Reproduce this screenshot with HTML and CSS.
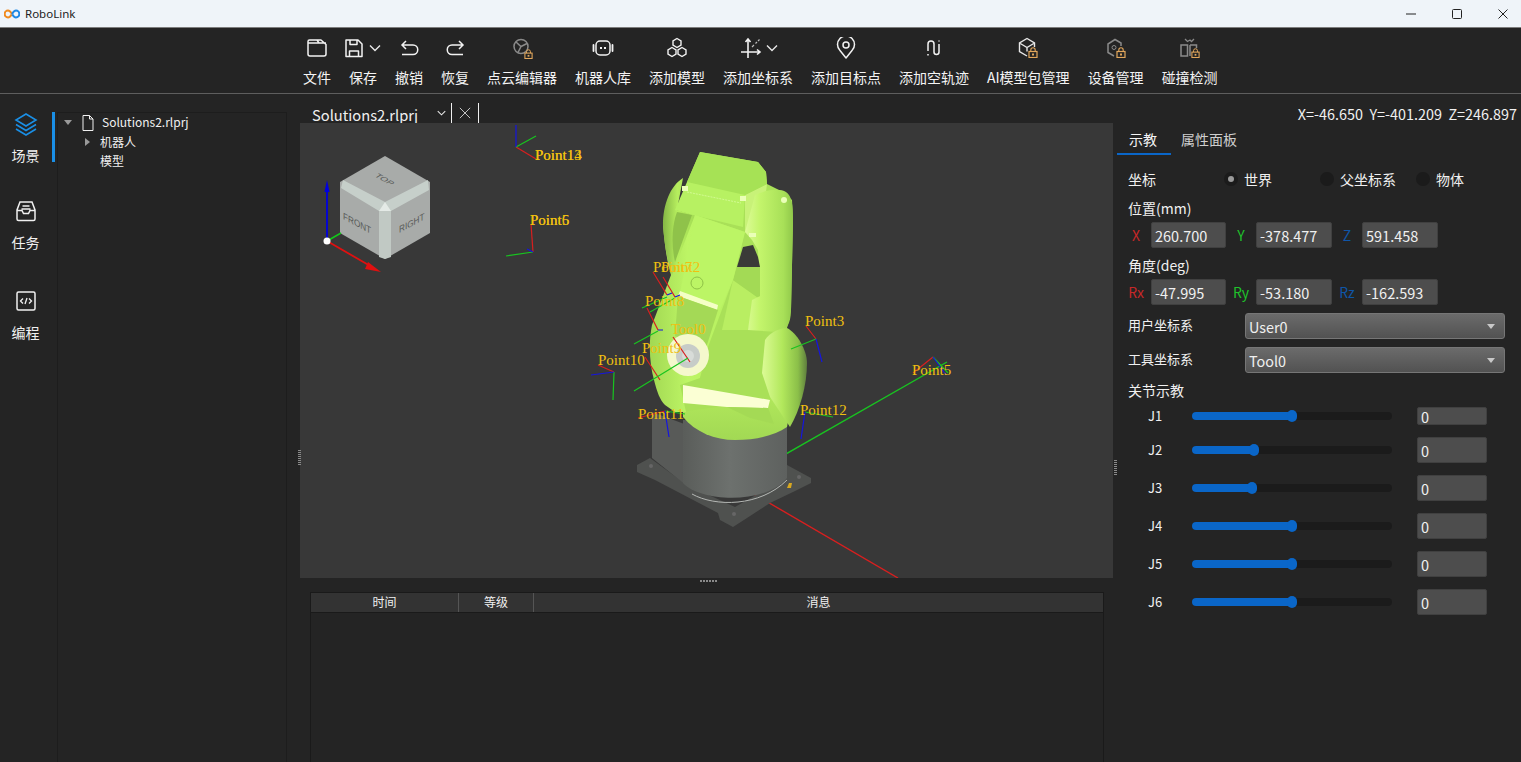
FILE: index.html
```html
<!DOCTYPE html>
<html lang="zh">
<head>
<meta charset="utf-8">
<title>RoboLink</title>
<link rel="stylesheet" href="styles.css">
</head>
<body>
<svg class="defs" width="0" height="0">
  <symbol id="lock" viewBox="0 0 10 11">
    <path d="M2.8 4.5V3a2.2 2.2 0 0 1 4.4 0v1.5" fill="none" stroke="#e2a75c" stroke-width="1.1"/>
    <rect x="1" y="4.5" width="8" height="6" fill="none" stroke="#e2a75c" stroke-width="1.2"/>
    <rect x="4" y="6.5" width="2" height="2" fill="#e2a75c"/>
  </symbol>
  <symbol id="chev" viewBox="0 0 12 8">
    <path d="M1 1.5l5 5 5-5" fill="none" stroke="#e8e8e8" stroke-width="1.4"/>
  </symbol>
</svg>

<header class="titlebar">
  <div class="brand">
    <svg class="logo" viewBox="0 0 16 10"><path d="M8 5C6.5 2.5 5.5 1.6 4 1.6a3.4 3.4 0 0 0 0 6.8c1.5 0 2.5-.9 4-3.4" fill="none" stroke="#f08a1e" stroke-width="2"/><path d="M8 5c1.500-2.500 2.500-3.400 4-3.400a3.400 3.400 0 0 1 0 6.800c-1.500 0-2.500-.9-4-3.400" fill="none" stroke="#1e88e5" stroke-width="2"/></svg>
    <span>RoboLink</span>
  </div>
  <div class="winctl">
    <svg viewBox="0 0 12 12"><path d="M1 6h10" stroke="#222" fill="none"/></svg>
    <svg viewBox="0 0 12 12"><rect x="1.500" y="1.500" width="9" height="9" rx="1" stroke="#222" fill="none"/></svg>
    <svg viewBox="0 0 12 12"><path d="M1.500 1.500l9 9M10.500 1.500l-9 9" stroke="#222" fill="none"/></svg>
  </div>
</header>

<nav class="toolbar">
  <div class="tool">
    <div class="ico"><svg viewBox="0 0 22 22"><path d="M2 4.500A1.500 1.500 0 0 1 3.500 3H15l5 4.500v9.500a2 2 0 0 1-2 2H4a2 2 0 0 1-2-2zM2 6h18M11 3l2 3" fill="none" stroke="#f2f2f2" stroke-width="1.500" stroke-linejoin="round"/></svg></div>
    <span>文件</span>
  </div>
  <div class="tool">
    <div class="ico split"><svg viewBox="0 0 22 22" class="shift-s"><path d="M3 3h12l4 4v12.500H3zM7 3v4.500h7V3M6.500 19.500V14h9v5.500" fill="none" stroke="#f2f2f2" stroke-width="1.500" stroke-linejoin="round"/></svg><svg class="chev" viewBox="0 0 12 8"><use href="#chev"/></svg></div>
    <span>保存</span>
  </div>
  <div class="tool">
    <div class="ico"><svg viewBox="0 0 22 22"><path d="M8 4L4 8l4 4M4 8h11a4.500 4.500 0 0 1 0 9.500H4" fill="none" stroke="#f2f2f2" stroke-width="1.500"/></svg></div>
    <span>撤销</span>
  </div>
  <div class="tool">
    <div class="ico"><svg viewBox="0 0 22 22"><path d="M15 4l4 4-4 4M19 8H8a4.500 4.500 0 0 0 0 9.500h11" fill="none" stroke="#f2f2f2" stroke-width="1.500"/></svg></div>
    <span>恢复</span>
  </div>
  <div class="tool">
    <div class="ico"><svg viewBox="0 0 22 22" class="withlock"><circle cx="10" cy="9.500" r="7" fill="none" stroke="#8a8a8a" stroke-width="1.500"/><path d="M5 5l5 4.500 6-3M10 9.500l-3 6" fill="none" stroke="#8a8a8a" stroke-width="1.500"/><use href="#lock" x="13" y="12" width="9" height="10"/></svg></div>
    <span>点云编辑器</span>
  </div>
  <div class="tool">
    <div class="ico"><svg viewBox="0 0 22 22"><rect x="4" y="4" width="14" height="14" rx="4" fill="none" stroke="#f2f2f2" stroke-width="1.500"/><path d="M1.500 8v6M20.500 8v6" stroke="#f2f2f2" stroke-width="1.800" stroke-linecap="round"/><rect x="8" y="10" width="2" height="2" fill="#f2f2f2"/><rect x="12" y="10" width="2" height="2" fill="#f2f2f2"/></svg></div>
    <span>机器人库</span>
  </div>
  <div class="tool">
    <div class="ico"><svg viewBox="0 0 22 22"><path d="M11 1.500l4 2.300v4.400l-4 2.300-4-2.300V3.800zM6 10.500l4 2.300v4.400l-4 2.300-4-2.300v-4.400zM16 10.500l4 2.300v4.400l-4 2.300-4-2.300v-4.400z" fill="none" stroke="#f2f2f2" stroke-width="1.400"/></svg></div>
    <span>添加模型</span>
  </div>
  <div class="tool">
    <div class="ico split"><svg viewBox="0 0 22 22" class="shift-a"><path d="M8 21V2M1 15h19M5.500 5L8 2l2.500 3M17 12.500l3 2.500-3 2.500" fill="none" stroke="#f2f2f2" stroke-width="1.600"/><path d="M12 10l2-2M15.500 6.500l1.500-1.500M18 4l1.500-1.500" stroke="#bdbdbd" stroke-width="1.200"/></svg><svg class="chev" viewBox="0 0 12 8"><use href="#chev"/></svg></div>
    <span>添加坐标系</span>
  </div>
  <div class="tool">
    <div class="ico"><svg viewBox="0 0 22 22"><path d="M11 21L5 13.500A8.500 8.500 0 1 1 17 13.500z" fill="none" stroke="#f2f2f2" stroke-width="1.500" stroke-linejoin="round"/><circle cx="11" cy="8" r="3" fill="none" stroke="#f2f2f2" stroke-width="1.500"/></svg></div>
    <span>添加目标点</span>
  </div>
  <div class="tool">
    <div class="ico"><svg viewBox="0 0 22 22"><path d="M5 14V7a3 3 0 0 1 6 0v8a2.500 2.500 0 0 0 5 0V7" fill="none" stroke="#f2f2f2" stroke-width="1.500"/><path d="M5 17v1.500M16 3.500v1" stroke="#f2f2f2" stroke-width="1.500"/></svg></div>
    <span>添加空轨迹</span>
  </div>
  <div class="tool">
    <div class="ico"><svg viewBox="0 0 22 22"><path d="M10 19l-7.500-4.500V6L10 1.500 17.500 6v4M2.500 6l7.500 4.500L17.500 6M10 10.500v4" fill="none" stroke="#e8e8e8" stroke-width="1.400"/><use href="#lock" x="11" y="10" width="10" height="11"/></svg></div>
    <span>AI模型包管理</span>
  </div>
  <div class="tool">
    <div class="ico"><svg viewBox="0 0 22 22"><path d="M9 19l-6-3.500V7l7-4.500L16 6v3" fill="none" stroke="#8a8a8a" stroke-width="1.500"/><circle cx="9" cy="10.500" r="2" fill="none" stroke="#8a8a8a"/><use href="#lock" x="11" y="10" width="10" height="11"/></svg></div>
    <span>设备管理</span>
  </div>
  <div class="tool">
    <div class="ico"><svg viewBox="0 0 22 22"><rect x="2" y="8" width="6.500" height="11" fill="none" stroke="#8a8a8a" stroke-width="1.500"/><path d="M11 8h6.500v3M11 8v11" fill="none" stroke="#8a8a8a" stroke-width="1.500"/><path d="M6 2l2.500 2.500L11 3l1.500 1.500L15 2" fill="none" stroke="#8a8a8a" stroke-width="1.300"/><use href="#lock" x="12" y="11" width="9" height="10"/></svg></div>
    <span>碰撞检测</span>
  </div>
</nav>

<main class="workspace">
  <aside class="rail">
    <div class="rail-item active">
      <svg viewBox="0 0 24 24"><path d="M12 2l10 6-10 6L2 8zM2 12.500l10 6 10-6M2 17l10 6 10-6" fill="none" stroke="#1a8fe6" stroke-width="1.600"/></svg>
      <span>场景</span>
    </div>
    <div class="rail-item tasks">
      <svg viewBox="0 0 24 24"><path d="M6 3h12l3 8v9a1.500 1.500 0 0 1-1.500 1.500h-15A1.500 1.500 0 0 1 3 20v-9zM3 11.500h5l1.500 3h5l1.500-3h5M8.500 7h7M7.500 10h9" fill="none" stroke="#f0f0f0" stroke-width="1.500"/></svg>
      <span>任务</span>
    </div>
    <div class="rail-item">
      <svg viewBox="0 0 24 24"><rect x="3" y="3" width="18" height="18" rx="1.500" fill="none" stroke="#f0f0f0" stroke-width="1.500"/><path d="M9 9.500L6.500 12 9 14.500M15 9.500l2.500 2.500-2.500 2.500M13 9l-2 6" fill="none" stroke="#f0f0f0" stroke-width="1.300"/></svg>
      <span>编程</span>
    </div>
  </aside>

  <section class="tree">
    <div class="tree-row root">
      <i class="caret-down"></i>
      <svg class="file" viewBox="0 0 12 16"><path d="M1 .5h6.500L11 4v11.500H1zM7.500 .5V4H11" fill="none" stroke="#f0f0f0"/></svg>
      <span>Solutions2.rlprj</span>
    </div>
    <div class="tree-row child"><i class="caret-right"></i><span>机器人</span></div>
    <div class="tree-row leaf"><span>模型</span></div>
  </section>

  <div class="stage">
    <div class="tabstrip">
      <div class="doc-tab">
        <span class="doc-name">Solutions2.rlprj</span>
        <svg class="doc-chev" viewBox="0 0 12 8"><use href="#chev"/></svg>
        <svg class="doc-x" viewBox="0 0 14 14"><path d="M1 1l12 12M13 1L1 13" stroke="#e0e0e0" fill="none"/></svg>
      </div>
      <div class="readout">X=-46.650&nbsp; Y=-401.209&nbsp; Z=246.897</div>
    </div>

    <div class="panes">
      <div class="center">
        <div class="viewport">
          <svg class="scene" viewBox="300 123 813 455">
            <defs>
              <linearGradient id="cyl" x1="0" x2="1" y1="0" y2="0"><stop offset="0" stop-color="#5a5d5a"/><stop offset=".45" stop-color="#6d716e"/><stop offset="1" stop-color="#5e615f"/></linearGradient>
              <linearGradient id="glink" x1="0" x2="1" y1="0" y2="0"><stop offset="0" stop-color="#dcfb96"/><stop offset=".3" stop-color="#c4f56c"/><stop offset=".8" stop-color="#a8e058"/><stop offset="1" stop-color="#90c84a"/></linearGradient>
              <linearGradient id="gback" x1="0" x2="1" y1="0" y2="0"><stop offset="0" stop-color="#84b645"/><stop offset=".45" stop-color="#b6ee5e"/><stop offset="1" stop-color="#a4dc55"/></linearGradient>
              <linearGradient id="glower" x1="0" x2="1" y1="0" y2="0"><stop offset="0" stop-color="#a2d853"/><stop offset=".4" stop-color="#bdf565"/><stop offset="1" stop-color="#b5ee5f"/></linearGradient>
              <linearGradient id="gshoulder" x1="0" x2="1" y1="0" y2="0"><stop offset="0" stop-color="#dcfb96"/><stop offset=".45" stop-color="#b2e85c"/><stop offset=".8" stop-color="#8bbf49"/><stop offset="1" stop-color="#5f7e3e"/></linearGradient>
              <linearGradient id="gdome" x1="0" x2="0" y1="0" y2="1"><stop offset="0" stop-color="#b6ec5e"/><stop offset="1" stop-color="#a2d954"/></linearGradient>
            </defs>

            <!-- long world axes -->
            <path class="ax-g wide" d="M735 483L947 362"/>
            <path class="ax-r wide" d="M735 483L898 578"/>

            <!-- base -->
            <path d="M637 465L650 458 687 485 735 507 787 477V465L811 478V483L793 492 770 503 747 518 733 527 720 520 718 513 655 480 637 472z" fill="#4f514f"/>
            <path d="M652 412V458L687 486V425z" fill="#585a58"/>
            <path d="M683 420V483C700 502 765 505 787 478V425z" fill="url(#cyl)"/>
            <path d="M692 494C715 507 760 507 787 480" fill="none" stroke="#b5b8b5"/>
            <circle cx="651" cy="466" r="2" fill="#666"/><circle cx="799" cy="477" r="2" fill="#666"/><circle cx="734" cy="514" r="2" fill="#666"/>
            <path d="M787 488l2-5 3 0-1 5z" fill="#d8a820"/>

            <!-- robot -->
            <path d="M683 405V417C695 432 715 440 735 440C758 440 775 435 787 427L792 398 700 380z" fill="url(#gdome)"/>
            <path d="M700 152L758 162 766 172 767 184 783 192 792 200 793 220 791 310 787 328 770 400 680 412 676 380 690 240 687 182z" fill="#a9e058"/>
            <path d="M663 225C665 250 668 265 671 275L652 325C648 345 650 365 654 380C657 392 660 400 665 405L675 412H686L680 385 700 378 720 340 735 280 745 232 695 215z" fill="url(#glower)"/>
            <path d="M683 178C670 186 663 205 663 225C664 240 667 262 672 275L695 215 677 210z" fill="url(#gback)"/>
            <path d="M677 212L692 215 675 262C671 245 672 225 677 212z" fill="#8fc24a"/>
            <path d="M745 232L733 280 708 347 700 378 745 410 770 400 765 340 760 295 757 297z" fill="#a9e058"/>
            <path d="M733 280L757 297 748 330 722 330z" fill="#b9ee62"/>
            <path d="M745 195L767 184 760 240 745 232z" fill="#c8f278"/>
            <path d="M755 195C765 190 780 188 786 192C792 196 793 205 793 220L791 310C791 325 785 332 778 332L748 330 752 300 760 296 758 250 752 240 745 232z" fill="url(#glink)"/>
            <path d="M743 247L753 245 758 257 760 267 737 267z" fill="#3a3a38"/>
            <path d="M737 267H760V296L757 297 733 280z" fill="#a3da55"/>
            <path d="M700 152L758 162 766 172 767 184 745 195 687 182z" fill="#a6e255"/>
            <path d="M687 182L745 195 743 227 693 215 675 210z" fill="#b7f162"/>
            <path d="M687 192L741 203" stroke="#e3ffb0" stroke-dasharray="2 1" stroke-width=".6" fill="none"/>
            <path d="M695 215L745 232 733 280 720 310 680 293z" fill="#bcf565"/>
            <path d="M680 291L718 305 717 310 678 296z" fill="#f4ffc6"/>
            <path d="M678 296L718 310 706 348 675 336z" fill="#a4d956"/>
            <path d="M765 340C770 332 780 328 787 328C797 333 807 350 807 363C807 385 800 410 790 427L770 397 762 373z" fill="url(#gshoulder)"/>
            <path d="M683 385L770 400 768 408 727 407 683 403z" fill="#fbffd4"/>
            <path d="M727 407L768 408 774 424 750 418z" fill="#a4da55"/>
            <circle cx="697" cy="283" r="6" fill="none" stroke="#8ec246"/>
            <circle cx="688" cy="355" r="21" fill="#f5f8cc"/>
            <circle cx="688" cy="356" r="12" fill="#c7ccc8"/>
            <circle cx="688" cy="356" r="6" fill="#d8dcd8"/>
            <circle cx="784" cy="200" r="3" fill="#eaffb8"/>
            <rect x="682" y="186" width="6" height="5" fill="#eaffb8"/><rect x="740" y="196" width="6" height="5" fill="#eaffb8"/><rect x="749" y="233" width="7" height="4" fill="#eaffb8"/>

            <!-- target frames -->
            <path class="ax-r" d="M516 147L536 159"/><path class="ax-g" d="M516 147L536 136"/><path class="ax-b" d="M516 147V125"/>
            <path class="ax-r" d="M533 252L531 224"/><path class="ax-g" d="M533 252L506 256"/><path class="ax-b" d="M533 252L527 249"/>
            <path class="ax-r" d="M653 272L667 295M663 277L675 297M647 308L658 330M645 357L660 380M673 337L690 362M806 326L816 339M598 365L614 372M638 418L665 411M933 357L913 373"/>
            <path class="ax-g" d="M642 308L667 297M650 312L675 298M634 344L658 331M634 391L688 358M791 349L816 339M613 400L614 372M665 411L685 414M805 412L833 417M933 357L948 373"/>
            <path class="ax-b" d="M667 295L672 293M675 297L680 295M658 330L663 330M816 339L822 362M591 375L614 372M665 411L669 437M805 412L801 439M933 357L946 375"/>
            <g class="pts">
              <text x="535" y="160">Point13</text><text x="535" y="160">Point14</text>
              <text x="530" y="225">Point5</text><text x="530" y="225">Point6</text>
              <text x="653" y="272">Point7</text><text x="661" y="272">Point2</text>
              <text x="645" y="306">Point8</text>
              <text x="671" y="334">Tool0</text>
              <text x="642" y="353">Point9</text>
              <text x="598" y="365">Point10</text>
              <text x="638" y="419">Point11</text>
              <text x="800" y="415">Point12</text>
              <text x="805" y="326">Point3</text>
              <text x="912" y="375">Point5</text>
            </g>

            <!-- orientation cube -->
            <path d="M385 156L430 182V233L385 259 340 233V182z" fill="#a8aba9"/>
            <path d="M343 180L385 202 428 180 429 190 391 211H379L341 188z" fill="#c6cfca"/>
            <path d="M379 211H391V257L385 259 379 257z" fill="#c1c9c4"/>
            <path d="M379 211L385 202 391 211z" fill="#e4eae6"/>
            <text class="cube-t" transform="matrix(.86 .5 -.7 .42 374 176)">TOP</text>
            <text class="cube-t" transform="matrix(.86 .46 0 1 343 219)">FRONT</text>
            <text class="cube-t" transform="matrix(.86 -.46 0 1 399 233)">RIGHT</text>
            <path d="M327 241L341 233" stroke="#12c81a" stroke-width="1.600"/>
            <path d="M327 241V190" stroke="#0000e0" stroke-width="1.800"/>
            <path d="M327 180l-2.500 12h5z" fill="#0000e0"/>
            <path d="M327 241L372 267" stroke="#e01010" stroke-width="1.800"/>
            <path d="M381 272L368 262 365 269z" fill="#e01010"/>
            <circle cx="327" cy="241" r="3.500" fill="#fff"/>
          </svg>
          <i class="grip-v"></i>
          <i class="grip-h"></i>
        </div>
        <div class="log">
          <div class="log-head">
            <div class="c-time">时间</div>
            <div class="c-level">等级</div>
            <div class="c-msg">消息</div>
          </div>
        </div>
      </div>

      <aside class="props">
        <i class="grip-side"></i>
        <div class="tabs">
          <div class="tab on">示教</div>
          <div class="tab">属性面板</div>
        </div>
        <div class="coord-row">
          <span class="lbl">坐标</span>
          <label class="radio"><i class="dot sel"></i>世界</label>
          <label class="radio"><i class="dot"></i>父坐标系</label>
          <label class="radio"><i class="dot"></i>物体</label>
        </div>
        <div class="sect">位置(mm)</div>
        <div class="pose">
          <span class="ax red">X</span><span class="val">260.700</span>
          <span class="ax green">Y</span><span class="val">-378.477</span>
          <span class="ax blue">Z</span><span class="val">591.458</span>
        </div>
        <div class="sect">角度(deg)</div>
        <div class="pose">
          <span class="ax red">Rx</span><span class="val">-47.995</span>
          <span class="ax green">Ry</span><span class="val">-53.180</span>
          <span class="ax blue">Rz</span><span class="val">-162.593</span>
        </div>
        <div class="combo-row first"><span class="combo-lbl">用户坐标系</span><div class="combo">User0<i class="caret-down"></i></div></div>
        <div class="combo-row"><span class="combo-lbl">工具坐标系</span><div class="combo">Tool0<i class="caret-down"></i></div></div>
        <div class="sect joints">关节示教</div>
        <div class="jrow short"><span class="jn">J1</span><div class="track"><div class="fill" style="width:50%"></div></div><span class="jv">0</span></div>
        <div class="jrow"><span class="jn">J2</span><div class="track"><div class="fill" style="width:31%"></div></div><span class="jv">0</span></div>
        <div class="jrow"><span class="jn">J3</span><div class="track"><div class="fill" style="width:30%"></div></div><span class="jv">0</span></div>
        <div class="jrow"><span class="jn">J4</span><div class="track"><div class="fill" style="width:50%"></div></div><span class="jv">0</span></div>
        <div class="jrow"><span class="jn">J5</span><div class="track"><div class="fill" style="width:50%"></div></div><span class="jv">0</span></div>
        <div class="jrow"><span class="jn">J6</span><div class="track"><div class="fill" style="width:50%"></div></div><span class="jv">0</span></div>
      </aside>
    </div>
  </div>
</main>
</body>
</html>
```

FILE: styles.css
```css
* { box-sizing: border-box; }
html, body { margin: 0; height: 100%; }
body {
  width: 1521px;
  height: 762px;
  overflow: hidden;
  display: flex;
  flex-direction: column;
  background: #242424;
  color: #f0f0f0;
  font-family: "Noto Sans CJK SC", "Noto Sans", sans-serif;
  font-size: 14px;
}
.defs { position: absolute; }
i { display: block; }

.titlebar {
  height: 28px;
  flex: none;
  display: flex;
  justify-content: space-between;
  align-items: center;
  background: #eff4f9;
  border-bottom: 1px solid #7d7d7d;
  color: #222;
  font-family: "Noto Sans", sans-serif;
  font-size: 11.500px;
}
.brand { display: flex; align-items: center; gap: 5px; padding-left: 4px; }
.logo { width: 16px; height: 10px; }
.winctl { display: flex; gap: 34px; height: 100%; align-items: center; padding-right: 12px; }
.winctl svg { width: 12px; height: 12px; }

.toolbar {
  height: 66px;
  flex: none;
  display: flex;
  gap: 18px;
  padding: 9px 0 0 303px;
  border-bottom: 1px solid #5e5e5e;
}
.tool { display: flex; flex-direction: column; align-items: center; color: #f4f4f4; font-size: 14px; line-height: 20px; }
.ico { height: 22px; width: 22px; margin-bottom: 8px; display: flex; align-items: center; }
.ico svg { width: 22px; height: 22px; flex: none; }
.ico .chev { width: 12px; height: 8px; margin-left: 4px; }
.ico .shift-s { margin-left: -9px; }
.ico .shift-a { margin-left: -7px; }

.workspace { flex: 1; min-height: 0; display: flex; }
.rail { width: 57px; flex: none; padding-top: 18px; display: flex; flex-direction: column; gap: 40px; }
.rail-item {
  width: 55px;
  height: 50px;
  padding: 0 3px 0 2px;
  display: flex;
  flex-direction: column;
  align-items: center;
  border-right: 3px solid transparent;
  font-size: 14px;
  line-height: 20px;
}
.rail-item svg { width: 24px; height: 24px; margin-bottom: 9px; flex: none; }
.rail-item.active { border-right-color: #1a8fe6; margin-bottom: -3px; }

.tree {
  width: 230px;
  flex: none;
  margin-top: 18px;
  border: 1px solid #1d1d1d;
  border-bottom: none;
  font-size: 12px;
}
.tree-row { height: 19px; display: flex; align-items: center; }
.tree-row.root { font-size: 12px; padding-left: 6px; }
.tree-row.root span { line-height: 17px; padding-bottom: 2px; }
.tree-row.child { padding-left: 27px; }
.tree-row.leaf { padding-left: 42px; }
.file { width: 12px; height: 16px; margin: 0 8px 0 10px; }
.caret-down { width: 0; height: 0; border: 4px solid transparent; border-top: 5px solid #9a9a9a; border-bottom: none; }
.caret-right { width: 0; height: 0; border: 4px solid transparent; border-left: 5px solid #9a9a9a; border-right: none; margin-right: 10px; }

.stage { flex: 1; min-width: 0; display: flex; flex-direction: column; }
.tabstrip {
  height: 29px;
  flex: none;
  display: flex;
  justify-content: space-between;
  align-items: flex-end;
  padding: 0 4px 0 25px;
}
.doc-tab { display: flex; align-items: center; height: 20px; font-size: 14.700px; }
.doc-name { width: 125px; height: 20px; padding-top: 2px; line-height: 20px; }
.doc-chev { width: 9px; height: 6px; margin-right: 5px; }
.doc-x { width: 28px; height: 20px; padding: 3px 7px; border: solid #efefef; border-width: 0 1px; }
.readout { font-size: 14.400px; line-height: 20px; margin-bottom: -1px; }

.panes { flex: 1; min-height: 0; display: flex; }
.center { width: 826px; flex: none; padding-left: 13px; display: flex; flex-direction: column; }
.viewport { height: 455px; flex: none; position: relative; background: #383838; }
.scene { display: block; width: 813px; height: 455px; }
.ax-r, .ax-g, .ax-b { fill: none; stroke-width: 1.200; }
.ax-r { stroke: #d81f1f; }
.ax-g { stroke: #18c420; }
.ax-b { stroke: #1515e0; }
.wide { stroke-width: 1.400; }
.pts text { font-family: "Liberation Serif", serif; font-size: 15px; fill: #f0c010; }
.cube-t { font-family: "Liberation Sans", sans-serif; font-size: 9.500px; fill: #585a58; }
.grip-v { position: absolute; left: -2px; top: 327px; width: 3px; height: 15px; background: repeating-linear-gradient(#8a8a8a 0 1px, transparent 1px 2px); }
.grip-h { position: absolute; left: 400px; bottom: -4px; width: 17px; height: 2px; background: repeating-linear-gradient(90deg, #8a8a8a 0 2px, transparent 2px 3px); }

.log { flex: 1; margin: 14px 9px 0 10px; border: solid #1a1a1a; border-width: 0 1px; }
.log-head { height: 21px; display: grid; grid-template-columns: 148px 75px 1fr; background: #333; border: solid #1a1a1a; border-width: 1px 0; font-size: 12px; line-height: 18px; text-align: center; }
.log-head > div { border-right: 1px solid #555; }
.log-head > div:last-child { border-right: none; }

.props { width: 408px; flex: none; padding-left: 15px; position: relative; }
.grip-side { position: absolute; left: 1px; top: 337px; width: 3px; height: 15px; background: repeating-linear-gradient(#8a8a8a 0 1px, transparent 1px 2px); }
.tabs { height: 32px; display: flex; margin-left: -11px; gap: 10px; }
.tab { padding: 5px 0 0 0; line-height: 22px; color: #cfcfcf; }
.tab.on { width: 54px; padding-left: 12px; color: #f4f4f4; border-bottom: 2px solid #0a66c8; }
.coord-row { height: 20px; margin: 14px 0 10px; display: flex; align-items: center; line-height: 18px; }
.lbl { width: 96px; }
.radio { display: flex; align-items: center; gap: 6px; width: 96px; }
.dot { width: 14px; height: 14px; border-radius: 50%; background: #1b1b1b; position: relative; }
.dot.sel::after { content: ""; position: absolute; left: 4px; top: 4px; width: 6px; height: 6px; border-radius: 50%; background: #9a9a9a; }
.sect { height: 20px; line-height: 18px; margin-top: 9px; }
.pose { display: grid; grid-template-columns: 30px 75px 30px 76px 30px 76px; margin: 3px 0 0 -7px; height: 26px; align-items: center; }
.ax { text-align: center; }
.red { color: #c62828; }
.green { color: #1fc32b; }
.blue { color: #0f56a8; }
.val { height: 26px; line-height: 25px; font-size: 14.500px; background: #4d4d4d; border: 1px solid #404040; border-radius: 2px; padding-left: 3px; }
.pose + .sect { margin-top: 8px; }
.combo-row { display: flex; align-items: center; height: 26px; margin-top: 8px; }
.combo-lbl { width: 117px; font-size: 13px; line-height: 18px; padding-bottom: 2px; }
.combo {
  width: 260px;
  height: 26px;
  line-height: 25px;
  font-size: 14.400px;
  display: flex;
  justify-content: space-between;
  align-items: center;
  padding: 0 9px 0 3px;
  border: 1px solid #767676;
  border-radius: 3px;
  background: linear-gradient(#6b6b6b, #525252);
}
.combo .caret-down { border-width: 5px 4px 0 4px; border-top-color: #c8c8c8; }
.sect.joints { margin-top: 8px; }
.jrow { height: 26px; margin-top: 12px; display: flex; align-items: center; }
.jrow.short { height: 18px; margin-top: 6px; }
.jn { width: 64px; padding-left: 20px; font-size: 13px; line-height: 18px; }
.track { width: 200px; height: 8px; border-radius: 4px; background: #1b1b1b; }
.fill { height: 8px; border-radius: 4px; background: #0a66c8; position: relative; }
.fill::after { content: ""; position: absolute; right: -5px; top: -2px; width: 10px; height: 12px; border-radius: 5px; background: #0a66c8; }
.jv { width: 70px; height: 26px; margin-left: 25px; line-height: 25px; font-size: 14.500px; background: #4d4d4d; border: 1px solid #404040; border-radius: 2px; padding-left: 3px; }
.short .jv { height: 18px; line-height: 17px; }
```
